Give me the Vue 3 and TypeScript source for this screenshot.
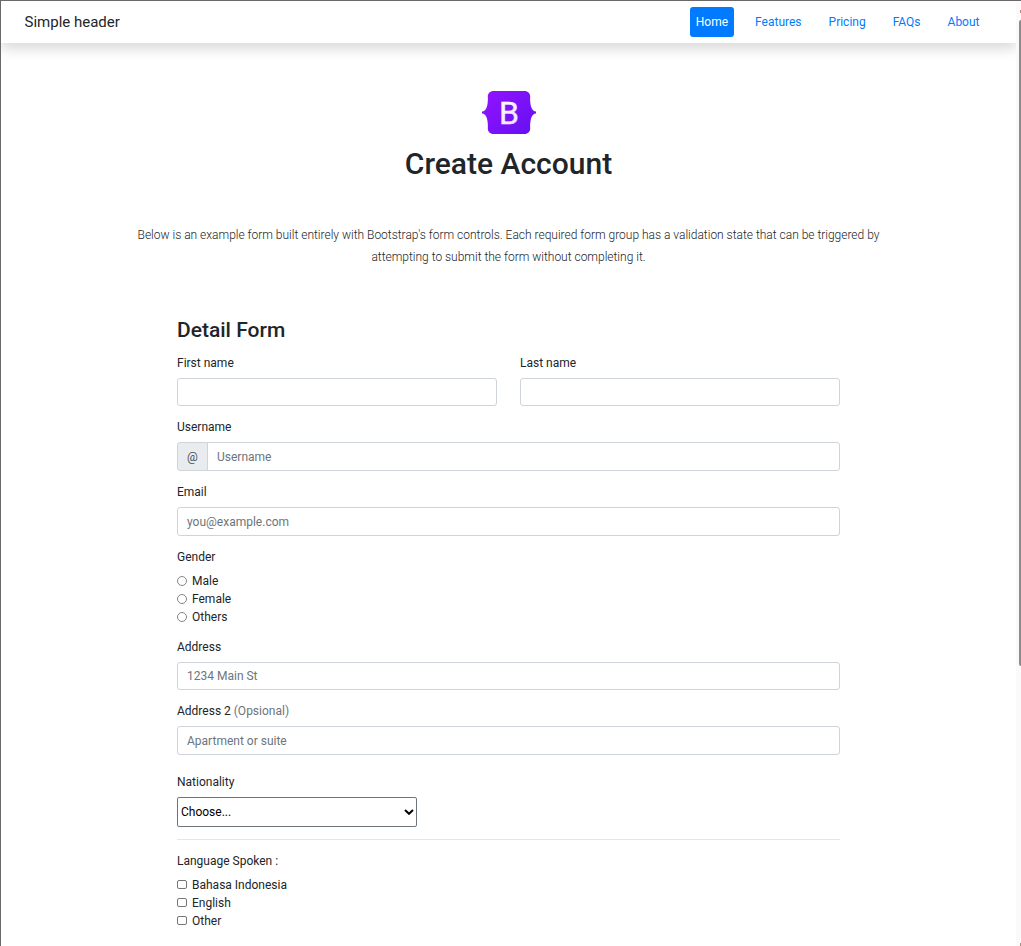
<script setup lang="ts">
import { ref } from 'vue'

const links: string[] = ['Home', 'Features', 'Pricing', 'FAQs', 'About']
const active = ref<string>('Home')
const genders: string[] = ['Male', 'Female', 'Others']
const languages: string[] = ['Bahasa Indonesia', 'English', 'Other']
const gender = ref<string>('')
const spoken = ref<string[]>([])
</script>

<template>
  <div class="window">
    <div class="page">
      <header class="header">
        <span class="brand">Simple header</span>
        <nav class="nav">
          <a
            v-for="link in links"
            :key="link"
            class="link"
            :class="{ active: link === active }"
            @click="active = link"
          >{{ link }}</a>
        </nav>
      </header>

      <section class="intro">
        <svg class="logo" width="54" height="43" viewBox="0 0 54 43">
          <defs>
            <linearGradient id="purple" x1="8" y1="0" x2="48" y2="43" gradientUnits="userSpaceOnUse">
              <stop offset="0" stop-color="#9013fe" />
              <stop offset="1" stop-color="#6610f2" />
            </linearGradient>
            <linearGradient id="pale" x1="18" y1="10" x2="30" y2="33" gradientUnits="userSpaceOnUse">
              <stop offset="0" stop-color="#ffffff" />
              <stop offset="1" stop-color="#f1e5fc" />
            </linearGradient>
          </defs>
          <path
            fill="url(#purple)"
            d="M11.5 0H42.5C46 0 48.3 2.6 48.2 5.7C48 8.8 48.2 12.8 49.2 16C50.2 19 51.7 20.3 54 20.5V22.5C51.7 22.7 50.2 24 49.2 27C48.2 30.2 48 34.2 48.2 37.3C48.3 40.4 46 43 42.5 43H11.5C8 43 5.7 40.4 5.8 37.3C6 34.2 5.8 30.2 4.8 27C3.8 24 2.3 22.7 0 22.5V20.5C2.3 20.3 3.8 19 4.8 16C5.8 12.8 6 8.8 5.8 5.7C5.7 2.6 8 0 11.5 0Z"
          />
          <text x="27" y="32.6" text-anchor="middle" class="letter" fill="url(#pale)" stroke="url(#pale)" stroke-width="0.4">B</text>
        </svg>
        <h1 class="title">Create Account</h1>
        <p class="lead">
          Below is an example form built entirely with Bootstrap's form controls. Each required form
          group has a validation state that can be triggered by attempting to submit the form without
          completing it.
        </p>
      </section>

      <form class="form" @submit.prevent>
        <h2 class="subtitle">Detail Form</h2>
        <div class="row">
          <label class="field"><span>First name</span><input class="control" type="text" /></label>
          <label class="field"><span>Last name</span><input class="control" type="text" /></label>
        </div>
        <label class="field">
          <span>Username</span>
          <span class="group">
            <span class="addon">@</span>
            <input class="control joined" type="text" placeholder="Username" />
          </span>
        </label>
        <label class="field"><span>Email</span><input class="control" type="text" placeholder="you@example.com" /></label>
        <div class="options">
          <span class="legend">Gender</span>
          <label v-for="item in genders" :key="item" class="option">
            <input v-model="gender" class="tick round" type="radio" name="gender" :value="item" />{{ item }}
          </label>
        </div>
        <label class="field"><span>Address</span><input class="control" type="text" placeholder="1234 Main St" /></label>
        <label class="field">
          <span>Address 2 <span class="muted">(Opsional)</span></span>
          <input class="control" type="text" placeholder="Apartment or suite" />
        </label>
        <label class="field nationality">
          <span>Nationality</span>
          <span class="picker">
            <span>Choose...</span>
            <svg width="10" height="6" viewBox="0 0 10 6">
              <path d="M1 1L5 4.8L9 1" fill="none" stroke="#000" stroke-width="2" />
            </svg>
          </span>
        </label>
        <hr class="rule" />
        <div class="options">
          <span class="legend">Language Spoken :</span>
          <label v-for="item in languages" :key="item" class="option">
            <input v-model="spoken" class="tick" type="checkbox" :value="item" />{{ item }}
          </label>
        </div>
      </form>
    </div>
    <div class="scrollbar">
      <i class="arrow"></i>
      <i class="thumb"></i>
      <i class="arrow"></i>
    </div>
  </div>
</template>

<style>
body {
  margin: 0;
  overflow: hidden;
  background: #fff;
}
</style>

<style scoped>
* {
  box-sizing: border-box;
}
.window {
  display: flex;
  width: 1021px;
  height: 946px;
  overflow: hidden;
  border-top: 1px solid #69696a;
  border-left: 1px solid #69696a;
  font: 400 12px/18px Roboto, sans-serif;
  color: #212529;
}
.page {
  width: 1015px;
  overflow: hidden;
}
.header {
  display: flex;
  align-items: center;
  justify-content: space-between;
  height: 42px;
  padding: 0 30.5px 0 23.5px;
  box-shadow: 0 6px 12px rgba(0, 0, 0, 0.15);
}
.brand {
  font-size: 15px;
  line-height: 22px;
}
.nav {
  display: flex;
  gap: 15px;
}
.link {
  padding: 6px;
  border-radius: 3px;
  color: #007bff;
  cursor: pointer;
}
.link.active {
  background: #007bff;
  color: #fff;
}
.intro {
  display: flex;
  flex-direction: column;
  align-items: center;
  padding-top: 48px;
}
.logo {
  display: block;
}
.letter {
  font: 400 32px Roboto, sans-serif;
}
.title {
  margin: 12px 0 0;
  font-size: 30px;
  line-height: 36px;
  font-weight: 500;
}
.lead {
  width: 760px;
  margin: 42px 0 0;
  font-weight: 300;
  line-height: 22px;
  letter-spacing: -0.01px;
  text-align: center;
}
.form {
  width: 663px;
  margin: 50px auto 0;
}
.subtitle {
  margin: 0 0 10.8px;
  font-size: 21px;
  line-height: 25px;
  font-weight: 500;
}
.row {
  display: grid;
  grid-template-columns: 1fr 1fr;
  gap: 23px;
}
.field {
  display: flex;
  flex-direction: column;
  gap: 6px;
  margin-bottom: 12px;
}
.control {
  width: 100%;
  height: 28.65px;
  margin: 0;
  padding: 4.4px 9px 4px;
  border: 1px solid #ced4da;
  border-radius: 3px;
  background: #fff;
  color: #495057;
  font: inherit;
  outline: none;
}
.control::placeholder {
  color: #6c757d;
  opacity: 1;
}
.group {
  display: flex;
}
.addon {
  display: flex;
  align-items: center;
  justify-content: center;
  width: 31px;
  margin-right: -1px;
  padding-top: 1px;
  border: 1px solid #ced4da;
  border-radius: 3px 0 0 3px;
  background: #e9ecef;
  color: #495057;
}
.joined {
  flex: 1;
  border-radius: 0 3px 3px 0;
}
.options {
  display: flex;
  flex-direction: column;
  margin-bottom: 12px;
}
.legend {
  margin-bottom: 6px;
}
.option {
  display: flex;
  align-items: center;
}
.tick {
  appearance: none;
  width: 10px;
  height: 9px;
  margin: 0 5px 1px 0;
  border: 1px solid #767676;
  border-radius: 2px;
  background: #fff;
}
.tick:checked {
  background: #007bff;
}
.round {
  height: 10px;
  margin-bottom: 0;
  border-color: #858585;
  border-radius: 50%;
}
.muted {
  color: #6c757d;
}
.nationality {
  width: 240px;
  margin: 18px 0 12px;
}
.picker {
  display: flex;
  align-items: center;
  justify-content: space-between;
  height: 30px;
  padding: 0 2px 0 3px;
  border: 1px solid #6c757d;
  border-radius: 2px;
  color: #000;
}
.rule {
  height: 1px;
  margin: 0 0 12px;
  border: 0;
  background: #e5e5e5;
}
.scrollbar {
  display: flex;
  flex-direction: column;
  align-items: flex-end;
  flex: 1;
  background: #fafafa;
}
.arrow {
  width: 1px;
  height: 3px;
  margin-top: 9px;
  background: #b08d78;
}
.thumb {
  width: 2px;
  height: 646px;
  margin: 7px 0 auto;
  border-radius: 2px 0 0 2px;
  background: #8b8b8b;
}
</style>
